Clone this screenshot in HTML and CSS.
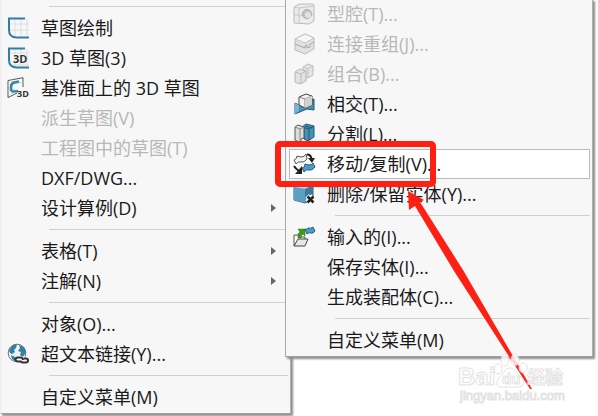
FILE: index.html
```html
<!DOCTYPE html>
<html lang="zh-CN">
<head>
    <meta charset="UTF-8">
    <meta name="viewport" content="width=device-width, initial-scale=1.0">
    <title>移动/复制</title>
    <link rel="stylesheet" href="styles.css">
</head>
<body>
    <nav class="menu main-menu">
        <hr>
        <button class="item">
            <svg class="icon" viewBox="0 0 22 22">
                <path d="M8 1V19M14 1V19M20 2V19M3 7H22M3 13H22" stroke="#ddd" fill="none"/>
                <path d="M18 1.500H2V13Q2 20.500 10 20.500H22" stroke="#2f7fa5" stroke-width="2" fill="none"/>
            </svg>
            <span>草图绘制</span>
        </button>
        <button class="item">
            <svg class="icon" viewBox="0 0 22 22">
                <path d="M8 1V19M14 1V19M20 2V19M3 6H22M3 18H22" stroke="#ddd" fill="none"/>
                <path d="M18 1.500H2V13Q2 20.500 10 20.500H22" stroke="#2f7fa5" stroke-width="2" fill="none"/>
                <text x="6" y="16" class="tag">3D</text>
            </svg>
            <span>3D 草图(3)</span>
        </button>
        <button class="item">
            <svg class="icon" viewBox="0 0 22 22">
                <path d="M10 16L1 20.500V3.500L16 .7V10" stroke="#555" fill="#fafafa"/>
                <path d="M5 2.500V18M1 8L16 5M1 14L8 12" stroke="#ccc" fill="none"/>
                <path d="M12 4.500L7 5.500Q4 6.500 4 10V12Q4 15 7 14.500L11 14" stroke="#2f8ab2" stroke-width="2.500" fill="none"/>
                <text x="10" y="20" class="tag small">3D</text>
            </svg>
            <span>基准面上的 3D 草图</span>
        </button>
        <button class="item" disabled><span class="icon"></span><span>派生草图(V)</span></button>
        <button class="item" disabled><span class="icon"></span><span>工程图中的草图(T)</span></button>
        <button class="item"><span class="icon"></span><span>DXF/DWG...</span></button>
        <button class="item has-sub"><span class="icon"></span><span>设计算例(D)</span></button>
        <hr>
        <button class="item has-sub"><span class="icon"></span><span>表格(T)</span></button>
        <button class="item has-sub"><span class="icon"></span><span>注解(N)</span></button>
        <hr>
        <button class="item"><span class="icon"></span><span>对象(O)...</span></button>
        <button class="item">
            <svg class="icon" viewBox="0 0 22 22">
                <circle cx="10" cy="10" r="8.800" fill="#eef3f5" stroke="#64747d"/>
                <path d="M2 7L6 2L10 1.500L9 5L7 7L8 9L5 11L3 10ZM12 2L17 4L19 9L16 14L13 12L14 9L11 8L13 5ZM4 12L8 14L8 18L5 16Z" fill="#347fa3"/>
                <rect x="8" y="13.500" width="12" height="7" rx="3" fill="#f7f7f7"/>
                <path d="M13 18.500H11Q8.500 18.500 8.500 16.500T11 14.500H14Q16 14.500 16 17M17 15.500H19Q21 15.500 21 17.500T19 19.500H16Q13.500 19.500 13.500 17.500" fill="none" stroke="#333" stroke-width="2"/>
            </svg>
            <span>超文本链接(Y)...</span>
        </button>
        <hr>
        <button class="item"><span class="icon"></span><span>自定义菜单(M)</span></button>
    </nav>

    <nav class="menu submenu">
        <button class="item" disabled>
            <svg class="icon" viewBox="0 0 22 22">
                <path d="M1 4L6 1H20L21 2V18L16 21L1 20Z" fill="#ebebeb" stroke="#bbb"/>
                <path d="M1 4L6 5V20M6 5L21 3M1 12H6M6 13L21 11" fill="none" stroke="#c8c8c8"/>
                <circle cx="14" cy="11" r="4.500" fill="#c4c4c4" stroke="#aaa"/>
                <circle cx="15" cy="12" r="3" fill="#e2e2e2"/>
            </svg>
            <span>型腔(T)...</span>
        </button>
        <button class="item" disabled>
            <svg class="icon" viewBox="0 0 22 22">
                <path d="M2 6L12 1L21 5V16L12 21L2 17Z" fill="#e2e2e2" stroke="#bbb"/>
                <path d="M2 6L12 10L21 5L12 1Z" fill="#f6f6f6" stroke="#c4c4c4"/>
                <path d="M2 11L12 15V13L14 12V15L17 14V11L21 9" fill="none" stroke="#a8a8a8"/>
            </svg>
            <span>连接重组(J)...</span>
        </button>
        <button class="item" disabled>
            <svg class="icon" viewBox="0 0 22 22">
                <path d="M10 4L15 1L20 3V12L15 15L10 12Z" fill="#e5e5e5" stroke="#bbb"/>
                <path d="M10 4L15 6L20 3M15 6V14" fill="none" stroke="#c5c5c5"/>
                <path d="M2 9L7 6L13 8V18L7 21L2 19Z" fill="#e2e2e2" stroke="#b5b5b5"/>
                <path d="M2 9L8 11L13 8M8 11V20" fill="none" stroke="#bbb"/>
            </svg>
            <span>组合(B)...</span>
        </button>
        <button class="item">
            <svg class="icon" viewBox="0 0 22 22">
                <path d="M2 10L6 12L14 9L21 6V17L14 16L9 18L2 21Z" fill="#4b91b5" stroke="#1f5877"/>
                <path d="M2 10L6 12V18L2 21Z" fill="#79b5d2"/>
                <path d="M6 4L13 1L19 3V12L12 15L6 12Z" fill="#f2f2f2" stroke="#444"/>
                <path d="M6 4L12 6L19 3M12 6V15" fill="none" stroke="#888"/>
                <path d="M12 6L19 3V12L12 15Z" fill="#d2d2d2"/>
            </svg>
            <span>相交(T)...</span>
        </button>
        <button class="item">
            <svg class="icon" viewBox="0 0 22 22">
                <path d="M9 4L13 1L21 3V14L15 18L11 16V6Z" fill="#4592b9" stroke="#1f5877"/>
                <path d="M9 4L16 6L21 3M16 6V17M12 3L19 5" fill="none" stroke="#1f5877"/>
                <path d="M2 4L5 2L11 4V15L8 16V20L2 17Z" fill="#ddd" stroke="#555"/>
                <path d="M2 4L7 6L11 4M7 6V19" fill="none" stroke="#888"/>
            </svg>
            <span>分割(L)...</span>
        </button>
        <button class="item active">
            <svg class="icon" viewBox="0 0 22 22">
                <path d="M1 7Q4 6 4 3L8 4Q12 4 13 1L14 6Q11 10 8 9Q5 8 3 11Z" fill="#f4f4f4" stroke="#555"/>
                <path d="M9 15Q12 15 12 11L16 12Q19 12 20 10L22 14Q19 18 16 17Q13 16 11 19Z" fill="#4d9bc2" stroke="#235f80"/>
                <path d="M14 1.500Q18 1.500 18.500 6M1 13Q2 15 6 18" fill="none" stroke="#222" stroke-width="2"/>
                <path d="M15 5H22L19 10ZM9 13V21H2Z" fill="#222"/>
            </svg>
            <span>移动/复制(V)...</span>
        </button>
        <button class="item">
            <svg class="icon" viewBox="0 0 22 22">
                <path d="M1 4L7 1L20 2V16L12 20L1 17Z" fill="#a5d3e8" stroke="#28627f"/>
                <path d="M1 4L12 6V20L1 17Z" fill="#5ba0c4"/>
                <path d="M12 6L20 2V16L12 20Z" fill="#3a7c9e"/>
                <path d="M14 13L20 19M20 13L14 19" stroke="#f7f7f7" stroke-width="5"/>
                <path d="M14.500 13.500L20.500 19.500M20.500 13.500L14.500 19.500" stroke="#222" stroke-width="2.500"/>
            </svg>
            <span>删除/保留实体(Y)...</span>
        </button>
        <hr>
        <button class="item">
            <svg class="icon" viewBox="0 0 22 22">
                <path d="M1 20V9H5L7 11H12V14" fill="#fff" stroke="#555"/>
                <path d="M1 20L5 13H15L12 20Z" fill="#e8e8e8" stroke="#444"/>
                <path d="M5 12Q4 7 7 6L5 3H12V10L10 8Q8 9 8 12Z" fill="#3d9a1d" stroke="#267010" stroke-width=".5"/>
                <path d="M12 3Q14 4 15 2Q18 3 20 1L22 5Q20 8 18 7Q16 6 14 8Z" fill="#4d9bc2" stroke="#235f80"/>
            </svg>
            <span>输入的(I)...</span>
        </button>
        <button class="item"><span class="icon"></span><span>保存实体(I)...</span></button>
        <button class="item"><span class="icon"></span><span>生成装配体(C)...</span></button>
        <hr>
        <button class="item"><span class="icon"></span><span>自定义菜单(M)</span></button>

        <!-- callout around the active item -->
        <div class="highlight"></div>
        <svg class="arrow" viewBox="0 0 126 200">
            <path d="M2 0L18 9L14 11L57 79L126 198L124 198L48 80L9 15L3 19Z" fill="#ff2014"/>
        </svg>
        <svg class="watermark" viewBox="0 0 112 54">
            <g fill="#fff" stroke="#dcdcdc">
                <ellipse cx="47" cy="8" rx="4" ry="6"/>
                <ellipse cx="57" cy="8" rx="4" ry="6"/>
                <ellipse cx="40" cy="17" rx="4" ry="5"/>
                <ellipse cx="65" cy="16" rx="4" ry="5"/>
                <path d="M52 16C57 16 58 21 63 25C68 30 66 36 58 35H46C38 36 37 30 42 25C46 21 47 16 52 16Z"/>
                <text x="0" y="33" class="brand">Bai</text>
                <text x="44" y="32" class="du">du</text>
                <text x="69" y="32" class="brand-cn">经验</text>
                <text x="2" y="48" class="site">jingyan.baidu.com</text>
            </g>
        </svg>
    </nav>
</body>
</html>
```

FILE: styles.css
```css
* {
    box-sizing: border-box;
}

body {
    margin: 0;
    min-height: 100vh;
    position: relative;
    background: #fff;
    font-family: "Open Sans", "Noto Sans CJK SC", sans-serif;
    overflow: hidden;
}

.menu {
    display: flex;
    flex-direction: column;
    background: #f7f7f7;
    border-right: 1px solid #b0b0b0;
    border-bottom: 1px solid #a0a0a0;
    box-shadow: 2px 2px 2px #8c8c8c;
}

.main-menu {
    width: calc(50% - 8px);
    border-left: 2px solid #f0f0f0;
    padding: 0 2px 1px 0;
}

.submenu {
    position: absolute;
    top: -1px;
    left: calc(50% - 14px);
    right: 5px;
    border-left: 1px solid #aaa;
    padding: 0 2px 1px 3px;
}

.menu hr {
    width: auto;
    height: 1px;
    margin: 6px 0 6px 47px;
    border: none;
    background: #d0d0d0;
}

.submenu hr {
    margin-left: 46px;
}

.item {
    display: flex;
    align-items: center;
    gap: 12px;
    height: 30px;
    padding: 0 4px;
    border: 1px solid transparent;
    background: none;
    color: #1a1a1a;
    font-family: inherit;
    font-size: 18px;
    line-height: 24px;
    text-align: left;
    white-space: nowrap;
}

.submenu .item {
    padding: 0 3px;
}

.item:disabled {
    color: #b8b8b8;
}

.item.active {
    background: #fff;
    border-color: #bbb;
}

.icon {
    width: 22px;
    height: 22px;
    flex: none;
    overflow: visible;
}

.has-sub::after {
    content: "";
    margin-left: auto;
    margin-right: 7px;
    border-left: 5px solid #666;
    border-top: 4px solid transparent;
    border-bottom: 4px solid transparent;
}

.tag {
    font: bold 11px "Open Sans", sans-serif;
    fill: #333;
}

.tag.small {
    font-size: 9px;
}

.highlight {
    position: absolute;
    top: 142px;
    left: -11px;
    width: 161px;
    height: 46px;
    border: 6px solid #ff2014;
    border-radius: 5px;
}

.arrow {
    position: absolute;
    top: 192px;
    left: 120px;
    width: 126px;
    height: 200px;
}

.watermark {
    position: absolute;
    top: 353px;
    left: 172px;
    width: 112px;
    height: 54px;
    opacity: 0.8;
}

.brand {
    font: bold 24px "Liberation Sans", sans-serif;
}

.du {
    font: bold 15px "Liberation Sans", sans-serif;
}

.brand-cn {
    font: bold 18px "Noto Sans CJK SC", sans-serif;
}

.site {
    font: 13px "Liberation Sans", sans-serif;
}
```
